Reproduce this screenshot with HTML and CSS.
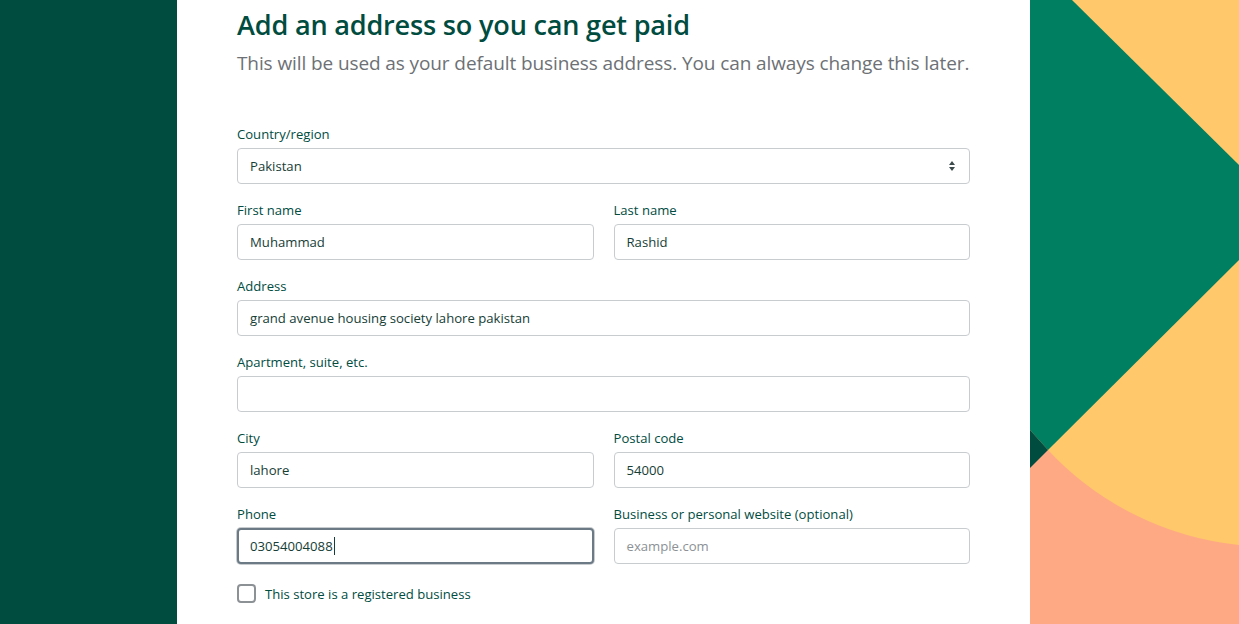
FILE: index.html
```html
<!DOCTYPE html>
<html lang="en">
<head>
<meta charset="utf-8">
<title>Add an address</title>
<link rel="stylesheet" href="styles.css">
</head>
<body>
<div class="page">
  <aside class="side-left"></aside>
  <main class="main">
    <h1 class="title">Add an address so you can get paid</h1>
    <p class="subtitle">This will be used as your default business address. You can always change this later.</p>
    <form class="form">
      <div class="field">
        <label class="label">Country/region</label>
        <div class="input select">
          <span>Pakistan</span>
          <svg class="arrows" width="8" height="12" viewBox="0 0 8 12"><path d="M4 1 L7 5 H1 Z M4 11 L7 7 H1 Z" fill="#3d4a4c"/></svg>
        </div>
      </div>
      <div class="row">
        <div class="field">
          <label class="label">First name</label>
          <div class="input">Muhammad</div>
        </div>
        <div class="field">
          <label class="label">Last name</label>
          <div class="input">Rashid</div>
        </div>
      </div>
      <div class="field">
        <label class="label">Address</label>
        <div class="input">grand avenue housing society lahore pakistan</div>
      </div>
      <div class="field">
        <label class="label">Apartment, suite, etc.</label>
        <div class="input"></div>
      </div>
      <div class="row">
        <div class="field">
          <label class="label">City</label>
          <div class="input">lahore</div>
        </div>
        <div class="field">
          <label class="label">Postal code</label>
          <div class="input">54000</div>
        </div>
      </div>
      <div class="row">
        <div class="field">
          <label class="label">Phone</label>
          <div class="input focused">03054004088<span class="caret"></span></div>
        </div>
        <div class="field">
          <label class="label">Business or personal website (optional)</label>
          <div class="input placeholder">example.com</div>
        </div>
      </div>
      <div class="check">
        <span class="box"></span>
        <span class="check-label">This store is a registered business</span>
      </div>
    </form>
  </main>
  <aside class="side-right">
    <svg class="art" width="209" height="624" viewBox="0 0 209 624" preserveAspectRatio="none">
      <rect x="0" y="0" width="209" height="624" fill="#ffa984"/>
      <path d="M0 0 H209 V545 A304 304 0 0 1 18 450 Z" fill="#ffc96b"/>
      <polygon points="0,0 42,0 209,165 209,260 18,450 0,430" fill="#008060"/>
      <polygon points="0,430 18,450 0,468" fill="#004c3f"/>
    </svg>
  </aside>
</div>
</body>
</html>
```

FILE: styles.css
```css
* { box-sizing: border-box; }
html, body { margin: 0; padding: 0; }
body {
  font-family: "Open Sans", "Noto Sans", sans-serif;
  background: #fff;
  overflow: hidden;
}
.page {
  display: flex;
  width: 1239px;
  height: 624px;
}
.side-left {
  width: 177px;
  background: #004c3f;
  flex: none;
}
.main {
  width: 853px;
  flex: none;
  padding: 5px 60px 0 60px;
}
.side-right {
  flex: 1;
  position: relative;
  overflow: hidden;
}
.art { display: block; }
.title {
  margin: 0;
  font-size: 27.1px;
  line-height: 40px;
  font-weight: 600;
  color: #004c3f;
  letter-spacing: -0.2px;
}
.subtitle {
  margin: 4px 0 0 0;
  font-size: 19px;
  line-height: 28px;
  color: #6d7175;
  letter-spacing: -0.1px;
}
.form {
  margin-top: 47px;
  display: flex;
  flex-direction: column;
  gap: 16px;
  width: 733px;
}
.row {
  display: grid;
  grid-template-columns: 1fr 1fr;
  gap: 20px;
}
.field {
  display: flex;
  flex-direction: column;
  gap: 4px;
}
.label {
  font-size: 13.1px;
  line-height: 20px;
  color: #004c3f;
}
.input {
  height: 36px;
  border: 1px solid #c9cccf;
  border-radius: 4px;
  padding: 0 12px;
  display: flex;
  align-items: center;
  font-size: 13.15px;
  color: #163d36;
  background: #fff;
}
.select { justify-content: space-between; padding-right: 13px; }
.arrows { display: block; }
.focused {
  border: 2px solid #6b7a85;
  padding-left: 11px;
  box-shadow: 0 0 0 1px #c9cccf;
}
.caret {
  display: inline-block;
  width: 1px;
  height: 18px;
  background: #163d36;
  margin-left: 1px;
}
.placeholder { color: #8c9196; }
.check {
  display: flex;
  align-items: center;
  gap: 9px;
  margin-top: 4px;
}
.box {
  width: 19px;
  height: 19px;
  border: 2px solid #8c9196;
  border-radius: 4px;
  background: #fff;
}
.check-label {
  font-size: 13.1px;
  color: #004c3f;
}
```
